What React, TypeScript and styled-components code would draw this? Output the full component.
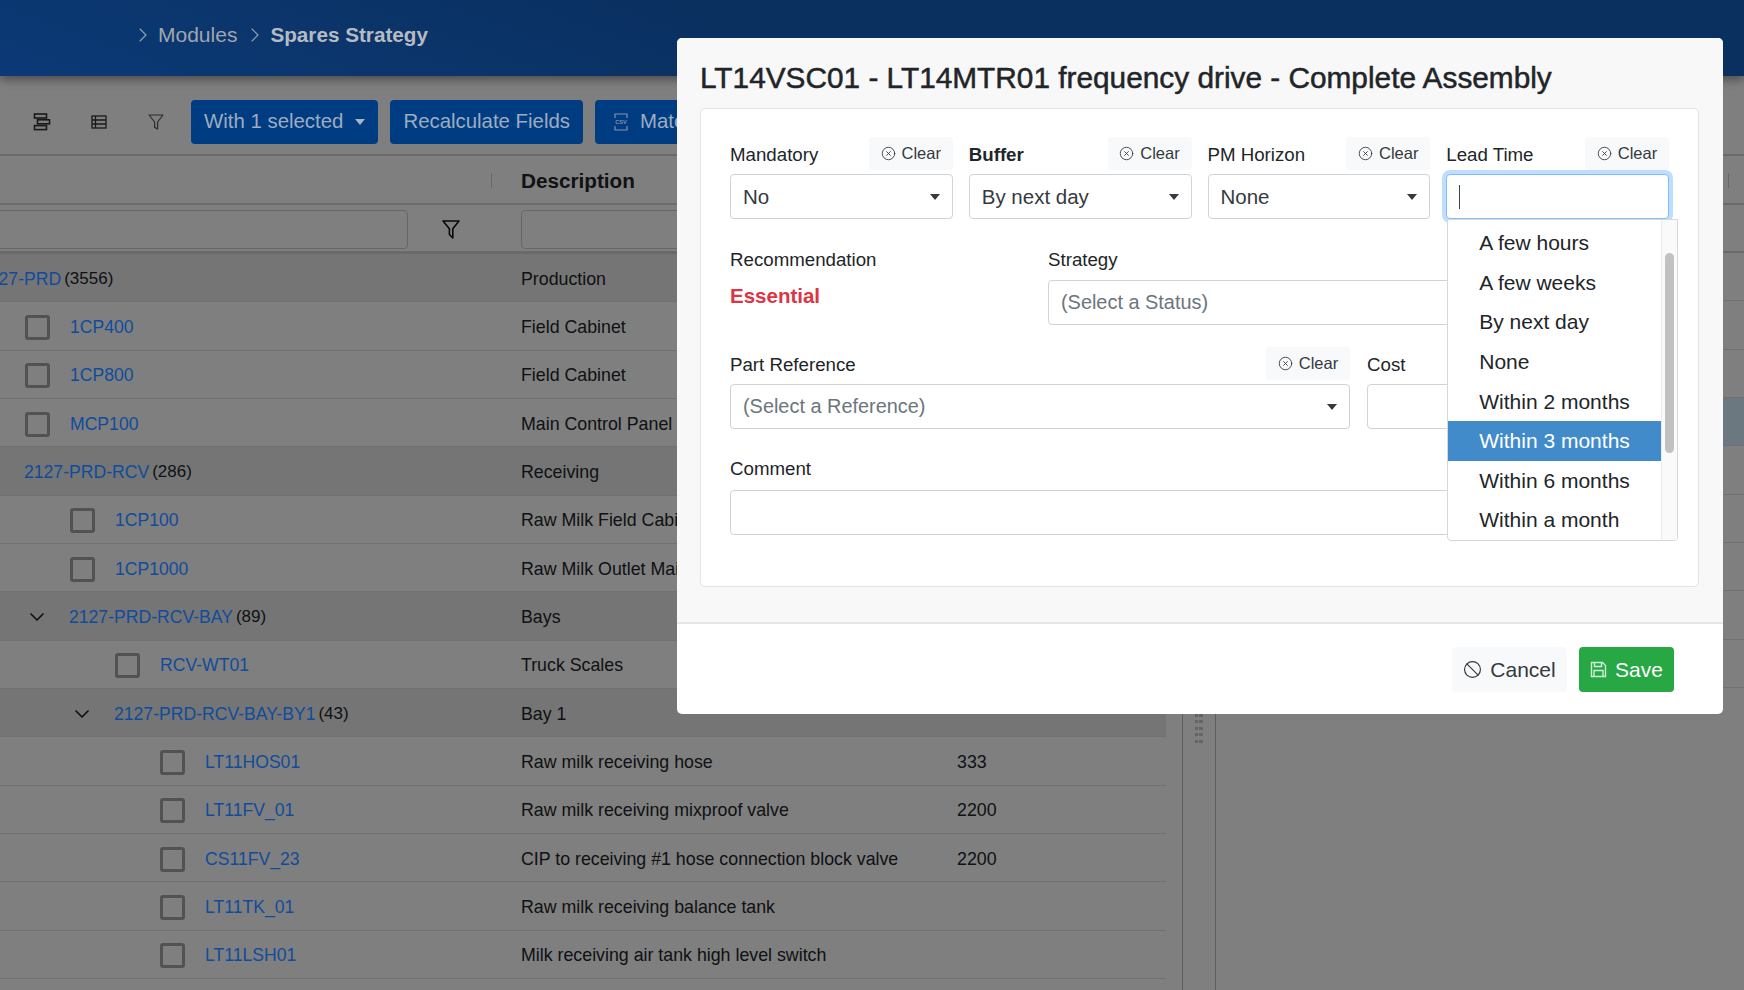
import React from 'react'
import styled, { createGlobalStyle } from 'styled-components'
import { ChevronDown, ChevronRight, CircleX, Ban } from 'lucide-react'

const GlobalStyle = createGlobalStyle`
  html, body {
    margin: 0;
    height: 100%;
    overflow: hidden;
    background: #fff;
    color: #212529;
    font-family: "Liberation Sans", Arial, sans-serif;
  }
  * { box-sizing: border-box; }
`

interface RowData {
  level: number
  name: string
  count?: string
  desc?: string
  value?: string
  group?: boolean
}

const rows: RowData[] = [
  { level: 0, name: '2127-PRD', count: '(3556)', desc: 'Production', group: true },
  { level: 1, name: '1CP400', desc: 'Field Cabinet' },
  { level: 1, name: '1CP800', desc: 'Field Cabinet' },
  { level: 1, name: 'MCP100', desc: 'Main Control Panel' },
  { level: 1, name: '2127-PRD-RCV', count: '(286)', desc: 'Receiving', group: true },
  { level: 2, name: '1CP100', desc: 'Raw Milk Field Cabinet' },
  { level: 2, name: '1CP1000', desc: 'Raw Milk Outlet Main Panel' },
  { level: 2, name: '2127-PRD-RCV-BAY', count: '(89)', desc: 'Bays', group: true },
  { level: 3, name: 'RCV-WT01', desc: 'Truck Scales' },
  { level: 3, name: '2127-PRD-RCV-BAY-BY1', count: '(43)', desc: 'Bay 1', group: true },
  { level: 4, name: 'LT11HOS01', desc: 'Raw milk receiving hose', value: '333' },
  { level: 4, name: 'LT11FV_01', desc: 'Raw milk receiving mixproof valve', value: '2200' },
  { level: 4, name: 'CS11FV_23', desc: 'CIP to receiving #1 hose connection block valve', value: '2200' },
  { level: 4, name: 'LT11TK_01', desc: 'Raw milk receiving balance tank' },
  { level: 4, name: 'LT11LSH01', desc: 'Milk receiving air tank high level switch' },
]

const leadTimes = [
  'A few hours',
  'A few weeks',
  'By next day',
  'None',
  'Within 2 months',
  'Within 3 months',
  'Within 6 months',
  'Within a month',
]

const sideRows = [0, 1, 2, 3, 4, 5, 6, 7, 8]

const App = () => {
  return (
    <>
      <GlobalStyle />
      <Page>
        <TopBar>
          <Crumb>
            <ChevronRight size={24} strokeWidth={1.1} />
            <span>Modules</span>
          </Crumb>
          <Crumb>
            <ChevronRight size={24} strokeWidth={1.1} />
            <CrumbActive>Spares Strategy</CrumbActive>
          </Crumb>
        </TopBar>

        <Toolbar>
          <ToolIcon>
            <svg width="18" height="18" viewBox="0 0 18 18" fill="none" stroke="#333" strokeWidth="1.6">
              <rect x="1.5" y="1" width="12" height="4" />
              <rect x="4.5" y="6.8" width="12" height="4" />
              <rect x="1.5" y="12.6" width="12" height="4" />
            </svg>
          </ToolIcon>
          <ToolIcon>
            <svg width="16" height="14" viewBox="0 0 16 14" fill="none" stroke="#333" strokeWidth="1.3">
              <rect x="1" y="1" width="14" height="12" />
              <path d="M1 5h14M1 9h14M4.5 1v12" />
            </svg>
          </ToolIcon>
          <ToolIcon>
            <svg width="16" height="16" viewBox="0 0 16 16" fill="none" stroke="#555" strokeWidth="1.2">
              <path d="M1 1h14L9.6 8v7L6.6 13.4V8z" strokeLinejoin="round" />
            </svg>
          </ToolIcon>
          <ToolButton>
            With 1 selected
            <Caret $light />
          </ToolButton>
          <ToolButton>Recalculate Fields</ToolButton>
          <ToolButton>
            <CsvIcon width="14" height="18" viewBox="0 0 14 18" fill="none" stroke="#8493a8" strokeWidth="1.2">
              <path d="M1 5V1h12v4M1 13v4h12v-4" />
              <text x="7" y="11" fontSize="5.5" fontWeight="700" textAnchor="middle" fill="#8493a8" stroke="none">
                CSV
              </text>
            </CsvIcon>
            Match Parts
          </ToolButton>
        </Toolbar>

        <Workspace>
          <LeftPane>
            <TableGrid>
              <HeadRow>
                <HeadTree />
                <HeadCell>Description</HeadCell>
                <span />
              </HeadRow>
              <FilterRow>
                <FilterTree>
                  <FilterInput />
                  <FilterSlot>
                    <svg width="20" height="22" viewBox="0 0 20 22" fill="none" stroke="#111" strokeWidth="1.6">
                      <path d="M2 3h16l-6.2 7.8V20l-3.4-3.5v-5.7z" strokeLinejoin="round" />
                    </svg>
                  </FilterSlot>
                </FilterTree>
                <FilterInput />
                <span />
              </FilterRow>
              {rows.map((row) => (
                <Row key={row.name} $group={row.group}>
                  <TreeCell $level={row.level}>
                    {row.group ? (
                      <>
                        <Toggle>{row.level > 1 && <ChevronDown size={24} strokeWidth={1.7} />}</Toggle>
                        <NodeLink>{row.name}</NodeLink>
                        <Count>{row.count}</Count>
                      </>
                    ) : (
                      <>
                        <Check />
                        <NodeLink>{row.name}</NodeLink>
                      </>
                    )}
                  </TreeCell>
                  <span>{row.desc}</span>
                  <span>{row.value}</span>
                </Row>
              ))}
              <Row />
            </TableGrid>
          </LeftPane>

          <Gutter>
            <Grip />
          </Gutter>

          <SidePane>
            <SideHead>
              <SideTick />
            </SideHead>
            <SideFilter />
            {sideRows.map((n) => (
              <SideRow key={n} $active={n === 3} />
            ))}
          </SidePane>
        </Workspace>

        <Backdrop />

        <Modal>
          <ModalBody>
            <ModalTitle>LT14VSC01 - LT14MTR01 frequency drive - Complete Assembly</ModalTitle>
            <Card>
              <FourCols>
                <Field>
                  <LabelRow>
                    <Label>Mandatory</Label>
                    <ClearButton>
                      <CircleX size={15} strokeWidth={1.4} />
                      Clear
                    </ClearButton>
                  </LabelRow>
                  <Select>
                    No
                    <Caret />
                  </Select>
                </Field>
                <Field>
                  <LabelRow>
                    <Label $bold>Buffer</Label>
                    <ClearButton>
                      <CircleX size={15} strokeWidth={1.4} />
                      Clear
                    </ClearButton>
                  </LabelRow>
                  <Select>
                    By next day
                    <Caret />
                  </Select>
                </Field>
                <Field>
                  <LabelRow>
                    <Label>PM Horizon</Label>
                    <ClearButton>
                      <CircleX size={15} strokeWidth={1.4} />
                      Clear
                    </ClearButton>
                  </LabelRow>
                  <Select>
                    None
                    <Caret />
                  </Select>
                </Field>
                <Field>
                  <LabelRow>
                    <Label>Lead Time</Label>
                    <ClearButton>
                      <CircleX size={15} strokeWidth={1.4} />
                      Clear
                    </ClearButton>
                  </LabelRow>
                  <FocusSelect>
                    <TextCursor />
                    <Dropdown>
                      <OptionList>
                        {leadTimes.map((item) => (
                          <Option key={item} $active={item === 'Within 3 months'}>
                            {item}
                          </Option>
                        ))}
                      </OptionList>
                      <ScrollTrack>
                        <ScrollThumb />
                      </ScrollTrack>
                    </Dropdown>
                  </FocusSelect>
                </Field>
              </FourCols>

              <StrategyRow>
                <Field>
                  <PlainLabel>Recommendation</PlainLabel>
                  <Essential>Essential</Essential>
                </Field>
                <Field>
                  <PlainLabel>Strategy</PlainLabel>
                  <Select $placeholder>(Select a Status)</Select>
                </Field>
              </StrategyRow>

              <ReferenceRow>
                <Field>
                  <LabelRow>
                    <Label>Part Reference</Label>
                    <ClearButton>
                      <CircleX size={15} strokeWidth={1.4} />
                      Clear
                    </ClearButton>
                  </LabelRow>
                  <Select $placeholder>
                    (Select a Reference)
                    <Caret />
                  </Select>
                </Field>
                <Field>
                  <LabelRow>
                    <Label>Cost</Label>
                  </LabelRow>
                  <Select />
                </Field>
              </ReferenceRow>

              <CommentField>
                <CommentLabel>Comment</CommentLabel>
                <Select />
              </CommentField>
            </Card>
          </ModalBody>
          <ModalFooter>
            <CancelButton>
              <Ban size={19} strokeWidth={1.5} />
              Cancel
            </CancelButton>
            <SaveButton>
              <svg width="17" height="17" viewBox="0 0 17 17" fill="none" stroke="#cfeed8" strokeWidth="1.4">
                <path d="M1.5 1.5h11l3 3v11h-14z" />
                <path d="M4.5 1.5v4h7v-4M4 15.5v-6h9v6" />
              </svg>
              Save
            </SaveButton>
          </ModalFooter>
        </Modal>
      </Page>
    </>
  )
}

export default App

const Page = styled.div`
  position: relative;
  width: 1744px;
  height: 990px;
  overflow: hidden;
  display: flex;
  flex-direction: column;
`

const TopBar = styled.header`
  height: 76px;
  flex-shrink: 0;
  display: flex;
  align-items: flex-start;
  gap: 6px;
  padding: 23px 0 0 131px;
  background: linear-gradient(200deg, #1460c0 55%, #1874ee 100%);
  box-shadow: 0 3px 10px rgba(0, 0, 0, 0.45);
  position: relative;
`

// the header text and the toolbar buttons stay brighter than the backdrop would leave them
const Crumb = styled.div`
  position: relative;
  z-index: 1;
  display: flex;
  align-items: center;
  gap: 3px;
  font-size: 21px;
  line-height: 24px;
  color: #a0a6ae;

  svg {
    color: #9aa3ad;
  }
`

const CrumbActive = styled.span`
  font-size: 20.7px;
  font-weight: 700;
  color: #b6bbc2;
`

const Toolbar = styled.div`
  height: 80px;
  flex-shrink: 0;
  display: flex;
  align-items: center;
  padding: 13px 0 0 13px;
  background: #fff;
  border-bottom: 2px solid #d4d4d4;
`

const ToolIcon = styled.div`
  width: 57px;
  display: flex;
  justify-content: center;
`

const ToolButton = styled.button`
  position: relative;
  z-index: 1;
  height: 44px;
  margin-left: 12px;
  padding: 0 13px;
  display: flex;
  align-items: center;
  gap: 12px;
  flex-shrink: 0;
  white-space: nowrap;
  border: none;
  border-radius: 4px;
  background: #003c82;
  color: #9eacc0;
  font-family: inherit;
  font-size: 20.4px;

  &:first-of-type {
    margin-left: 7px;
  }
`

const CsvIcon = styled.svg`
  margin-left: 6px;
`

const Caret = styled.i<{ $light?: boolean }>`
  width: 0;
  height: 0;
  flex-shrink: 0;
  border-left: 5px solid transparent;
  border-right: 5px solid transparent;
  border-top: 6px solid ${(props) => (props.$light ? '#a9b5c5' : '#343a40')};
`

const Workspace = styled.div`
  flex: 1;
  display: flex;
  min-height: 0;
`

const LeftPane = styled.div`
  width: 1166px;
  flex-shrink: 0;
  overflow: hidden;
`

const TableGrid = styled.div`
  width: 1211px;
  margin-left: -45px;
  font-size: 17.8px;
  color: #212529;
`

const HeadRow = styled.div`
  height: 49px;
  padding-top: 2px;
  display: grid;
  grid-template-columns: 566px 436px 209px;
  align-items: center;
  border-bottom: 2px solid #d8d8d8;
`

const HeadTree = styled.div`
  height: 100%;
  position: relative;

  &::after {
    content: '';
    position: absolute;
    right: 29px;
    top: 15px;
    height: 15px;
    border-right: 1px solid #d0d0d0;
  }
`

const HeadCell = styled.div`
  font-size: 20.7px;
  font-weight: 700;
`

const FilterRow = styled.div`
  height: 49px;
  padding-top: 2px;
  display: grid;
  grid-template-columns: 566px 436px 209px;
  align-items: center;
  border-bottom: 3px solid #d4d4d4;
`

const FilterTree = styled.div`
  display: flex;
  align-items: center;
`

const FilterInput = styled.div`
  width: 100%;
  height: 39px;
  flex: 1;
  background: #fff;
  border: 1px solid #c8ccd0;
  border-radius: 4px;
`

const FilterSlot = styled.div`
  width: 113px;
  padding-left: 33px;
  display: flex;
  flex-shrink: 0;
`

const Row = styled.div<{ $group?: boolean }>`
  height: 48.33px;
  padding-top: 3px;
  display: grid;
  grid-template-columns: 566px 436px 209px;
  align-items: center;
  background: ${(props) => (props.$group ? '#ebebeb' : '#ffffff')};
  border-bottom: 1px solid #dbe0ea;
`

const TreeCell = styled.div<{ $level: number }>`
  display: flex;
  align-items: center;
  padding-left: ${(props) => 24 + props.$level * 45}px;
`

const Toggle = styled.span`
  width: 45px;
  margin-left: -45px;
  padding-left: 1px;
  display: flex;
  flex-shrink: 0;
  color: #222;
`

const Check = styled.span`
  width: 25.5px;
  height: 25px;
  margin-left: 0.5px;
  margin-right: 20px;
  flex-shrink: 0;
  background: #fff;
  border: 3px solid #a4a4a4;
  border-radius: 3px;
`

const NodeLink = styled.a`
  position: relative;
  z-index: 1;
  font-size: 17.6px;
  color: #104c9c;
`

const Count = styled.span`
  margin-left: 3px;
  font-size: 17px;
`

const Gutter = styled.div`
  width: 50px;
  flex-shrink: 0;
  padding-left: 16px;
  display: flex;
  align-items: flex-start;
`

const Grip = styled.div`
  width: 35px;
  height: 100%;
  border-left: 1px solid #bbb;
  border-right: 1px solid #bbb;
  position: relative;

  &::after {
    content: '';
    position: absolute;
    left: 12px;
    top: 526px;
    width: 9px;
    height: 64px;
    background: repeating-linear-gradient(180deg, #c8c8c8 0 3px, transparent 3px 6.4px);
    -webkit-mask-image: repeating-linear-gradient(90deg, #000 0 3px, transparent 3px 4.5px);
  }
`

const SidePane = styled.div`
  flex: 1;
  display: flex;
  flex-direction: column;
`

const SideHead = styled.div`
  height: 49px;
  padding-left: 512px;
  padding-top: 17px;
  border-bottom: 2px solid #d4d4d4;
`

const SideTick = styled.div`
  width: 1px;
  height: 15px;
  background: #d0d0d0;
`

const SideFilter = styled.div`
  height: 48px;
  border-bottom: 2px solid #d4d4d4;
`

const SideRow = styled.div<{ $active?: boolean }>`
  height: 48.33px;
  background: ${(props) => (props.$active ? '#d7f0ff' : '#ffffff')};
  border-bottom: 1px solid #dbe0ea;
`

const Backdrop = styled.div`
  position: absolute;
  inset: 0;
  background: rgba(0, 0, 0, 0.5);
`

const Modal = styled.div`
  position: absolute;
  z-index: 2;
  left: 677px;
  top: 38px;
  width: 1046px;
  height: 676px;
  display: flex;
  flex-direction: column;
  background: #fff;
  border-radius: 5px;
`

const ModalBody = styled.div`
  height: 586px;
  flex-shrink: 0;
  padding: 0 24px 0 23px;
  background: #f8f8f8;
  border-bottom: 2px solid #e6e6e6;
  border-radius: 5px 5px 0 0;
`

const ModalTitle = styled.h1`
  margin: 0;
  height: 70px;
  padding-top: 23px;
  font-size: 29.8px;
  line-height: 34px;
  font-weight: 400;
  -webkit-text-stroke: 0.5px #212529;
  color: #212529;
  white-space: nowrap;
`

const Card = styled.div`
  height: 479px;
  padding: 28px 28px 0 29px;
  background: #fff;
  border: 1.5px solid #e4e4e4;
  border-radius: 5px;
`

const FourCols = styled.div`
  display: grid;
  grid-template-columns: repeat(4, 1fr);
  gap: 16px;
  height: 108px;
  margin-right: 1px;
`

const Field = styled.div`
  display: flex;
  flex-direction: column;
  min-width: 0;
`

const LabelRow = styled.div`
  height: 37px;
  display: flex;
  align-items: flex-start;
  justify-content: space-between;
`

const Label = styled.label<{ $bold?: boolean }>`
  padding-top: 7px;
  font-size: 18.7px;
  line-height: 22px;
  font-weight: ${(props) => (props.$bold ? 700 : 400)};
`

const PlainLabel = styled.label`
  height: 34.5px;
  padding-top: 4px;
  font-size: 18.7px;
  line-height: 22px;
`

const CommentLabel = styled(PlainLabel)`
  height: 36px;
`

const ClearButton = styled.button`
  width: 84px;
  height: 33px;
  padding: 0;
  display: flex;
  align-items: center;
  justify-content: center;
  gap: 6px;
  border: none;
  border-radius: 4px;
  background: #f8f9fa;
  color: #343a40;
  font-family: inherit;
  font-size: 16.5px;
`

const Select = styled.div<{ $placeholder?: boolean }>`
  height: 45px;
  padding: 0 12px;
  display: flex;
  align-items: center;
  justify-content: space-between;
  background: #fff;
  border: 1.5px solid #ced4da;
  border-radius: 4px;
  color: ${(props) => (props.$placeholder ? '#6c757d' : '#343a40')};
  font-size: ${(props) => (props.$placeholder ? 19.9 : 20.5)}px;
`

const FocusSelect = styled(Select)`
  position: relative;
  border-color: #80bdff;
  box-shadow: 0 0 0 4px #bfdeff;
`

const TextCursor = styled.span`
  width: 1px;
  height: 24px;
  background: #444;
`

const Dropdown = styled.div`
  position: absolute;
  left: 0;
  top: 44px;
  width: 231px;
  height: 322px;
  display: flex;
  background: #fff;
  border: 1px solid #d8d8d8;
  border-radius: 0 0 4px 4px;
  overflow: hidden;
  color: #212529;
`

const OptionList = styled.ul`
  flex: 1;
  margin: 0;
  padding: 3.5px 0 0 0;
  list-style: none;
`

const Option = styled.li<{ $active?: boolean }>`
  height: 39.6px;
  padding-left: 31px;
  display: flex;
  align-items: center;
  font-size: 21px;
  background: ${(props) => (props.$active ? '#428bca' : 'transparent')};
  color: ${(props) => (props.$active ? '#fff' : '#212529')};
`

const ScrollTrack = styled.div`
  width: 16px;
  flex-shrink: 0;
  background: #fafafa;
  border-left: 1px solid #ececec;
  padding: 33px 3px 0 3px;
`

const ScrollThumb = styled.div`
  height: 200px;
  border-radius: 5px;
  background: #c1c1c1;
`

const Essential = styled.div`
  padding-top: 4px;
  font-size: 20.5px;
  line-height: 24px;
  font-weight: 700;
  color: #dc3545;
`

const StrategyRow = styled.div`
  display: grid;
  grid-template-columns: 318px 1fr;
  height: 102.3px;
  margin-right: 1px;
`

const ReferenceRow = styled.div`
  display: grid;
  grid-template-columns: 620px 1fr;
  gap: 17px;
  height: 107.2px;
  margin-right: 1px;
`

const CommentField = styled.div`
  display: flex;
  flex-direction: column;
  margin-right: 1px;
`

const ModalFooter = styled.div`
  flex: 1;
  display: flex;
  align-items: flex-start;
  justify-content: flex-end;
  gap: 12px;
  padding: 23px 49px 0 0;
  border-radius: 0 0 5px 5px;
`

const CancelButton = styled.button`
  height: 45px;
  width: 115px;
  display: flex;
  align-items: center;
  justify-content: center;
  gap: 8px;
  padding: 0;
  border: none;
  border-radius: 4px;
  background: #f8f9fa;
  color: #343a40;
  font-family: inherit;
  font-size: 21px;
`

const SaveButton = styled.button`
  height: 45px;
  width: 95px;
  display: flex;
  align-items: center;
  justify-content: center;
  gap: 8px;
  padding: 0;
  border: none;
  border-radius: 4px;
  background: #28a745;
  color: #fff;
  font-family: inherit;
  font-size: 21px;
`
